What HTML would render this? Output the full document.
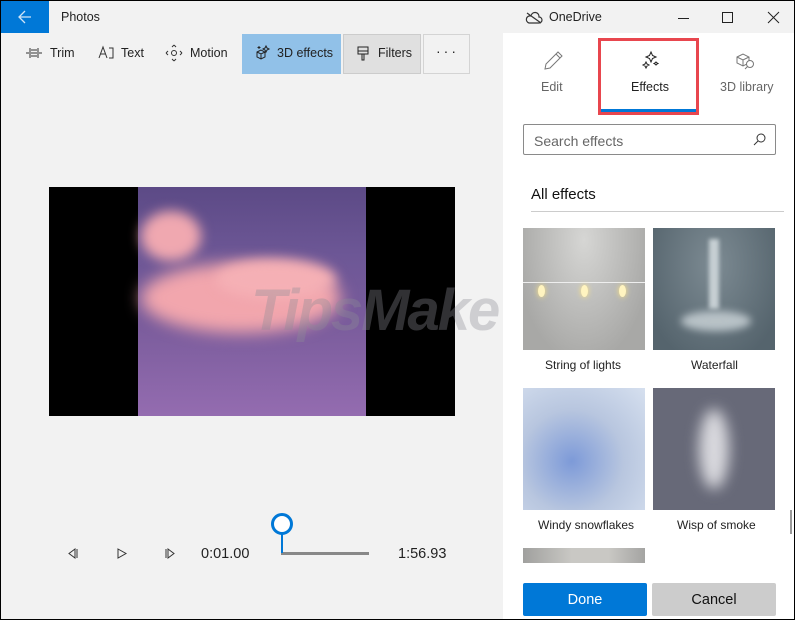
<!DOCTYPE html>
<html><head><meta charset="utf-8"><style>
*{margin:0;padding:0;box-sizing:border-box}
body{width:795px;height:620px;overflow:hidden;background:#000;font-family:"Liberation Sans",sans-serif;font-size:12.5px;color:#222;position:relative}
.a{position:absolute}
#win{left:1px;top:1px;width:793px;height:618px;background:#f2f2f2;overflow:hidden}
.t{position:absolute;white-space:nowrap}
svg{position:absolute;overflow:visible}
</style></head><body>
<div id="win" class="a">
 <div class="a" style="left:0;top:0;width:48px;height:32px;background:#0078d7"></div>
 <svg style="left:17px;top:9px" width="14" height="14"><path d="M1 7H13M7 1L1 7L7 13" stroke="#cfe4f7" stroke-width="1.3" fill="none"/></svg>
 <div class="t" style="left:60px;top:9px;font-size:12.5px">Photos</div>
 <svg style="left:25px;top:46px" width="16" height="12"><path d="M0 6H3M5 6H11M13 6H16M4 1V11M12 1V11M5 3H11M5 9H11" stroke="#333" stroke-width="1" fill="none"/></svg>
 <div class="t" style="left:49px;top:45px">Trim</div>
 <svg style="left:97px;top:45px" width="16" height="14"><path d="M1 12L5 1L9 12M2.5 8H7.5M11 2H15V12H11" stroke="#333" stroke-width="1" fill="none"/></svg>
 <div class="t" style="left:120px;top:45px">Text</div>
 <svg style="left:165px;top:44px" width="16" height="16"><circle cx="8" cy="8" r="2.5" stroke="#333" fill="none"/><path d="M8 0L6 2M8 0L10 2M8 16L6 14M8 16L10 14M0 8L2 6M0 8L2 10M16 8L14 6M16 8L14 10" stroke="#333" fill="none"/></svg>
 <div class="t" style="left:189px;top:45px">Motion</div>
 <div class="a" style="left:241px;top:33px;width:99px;height:40px;background:#91c1e8"></div>
 <svg style="left:254px;top:44px" width="16" height="16"><path d="M2 7L6 5L10 7V12L6 14L2 12ZM2 7L6 9L10 7M6 9V14M11 1L12 3L14 4L12 5L11 7L10 5L8 4L10 3ZM4 1V4M2.5 2.5H5.5" stroke="#222" fill="none"/></svg>
 <div class="t" style="left:276px;top:45px">3D effects</div>
 <div class="a" style="left:342px;top:33px;width:78px;height:40px;background:#e0e0e0;border:1px solid #ccc"></div>
 <svg style="left:356px;top:45px" width="12" height="16"><path d="M1 1H11V8H1ZM1 5H11M5 8V14H7V8" stroke="#222" fill="none"/></svg>
 <div class="t" style="left:377px;top:45px">Filters</div>
 <div class="a" style="left:422px;top:33px;width:47px;height:40px;border:1px solid #d4d4d4;background:#f2f2f2"></div>
 <div class="t" style="left:435px;top:42px;font-size:14px;letter-spacing:3px">···</div>
 <div class="a" style="left:48px;top:186px;width:406px;height:229px;background:#000"></div>
 <div class="a" style="left:137px;top:186px;width:228px;height:229px;background:linear-gradient(180deg,#5c4a86 0%,#6d5796 30%,#7a5c9c 60%,#946cb0 100%)"></div>
 <div class="a" style="left:140px;top:210px;width:60px;height:50px;border-radius:50%;background:#f0a8b0;filter:blur(6px)"></div>
 <div class="a" style="left:140px;top:262px;width:200px;height:70px;border-radius:50%;background:#f2a6ad;filter:blur(8px)"></div>
 <div class="a" style="left:215px;top:258px;width:120px;height:40px;border-radius:50%;background:#f5b0b5;filter:blur(6px)"></div>
 <div class="t" style="left:250px;top:276px;font-size:58px;font-weight:bold;font-style:italic;color:rgba(140,140,150,0.35);letter-spacing:-2px">TipsMake</div>
 <div class="t" style="left:502px;top:316px;font-size:17px;font-weight:bold;color:rgba(170,170,170,0.5)">.com</div>
 <svg style="left:67px;top:547px" width="10" height="11"><path d="M7 1L1 5.5L7 10ZM9 1V10" stroke="#333" fill="none"/></svg>
 <svg style="left:116px;top:547px" width="10" height="11"><path d="M1 1L9 5.5L1 10Z" stroke="#333" fill="none"/></svg>
 <svg style="left:164px;top:547px" width="10" height="11"><path d="M1 1V10M3 1L9 5.5L3 10Z" stroke="#333" fill="none"/></svg>
 <div class="t" style="left:200px;top:545px;font-size:14.5px">0:01.00</div>
 <div class="a" style="left:280px;top:551px;width:88px;height:3px;background:#888"></div>
 <div class="a" style="left:280px;top:530px;width:2px;height:22px;background:#0078d7"></div>
 <div class="a" style="left:270px;top:512px;width:22px;height:22px;border-radius:50%;border:3px solid #0078d7;background:#fff"></div>
 <div class="t" style="left:397px;top:545px;font-size:14.5px">1:56.93</div>
 <svg style="left:525px;top:11px" width="16" height="12"><path d="M3 11H13A3 3 0 0 0 13 5A4 4 0 0 0 5 4A3.5 3.5 0 0 0 3 11ZM1 1L15 11" stroke="#333" stroke-width="1.2" fill="none"/></svg>
 <div class="t" style="left:548px;top:9px;font-size:12.5px">OneDrive</div>
 <div class="a" style="left:677px;top:17px;width:11px;height:1px;background:#222"></div>
 <div class="a" style="left:721px;top:11px;width:11px;height:11px;border:1px solid #222"></div>
 <svg style="left:767px;top:11px" width="11" height="11"><path d="M0 0L11 11M11 0L0 11" stroke="#222" fill="none"/></svg>
 <div class="a" style="left:502px;top:32px;width:291px;height:586px;background:#fff"></div>
 <svg style="left:542px;top:50px" width="20" height="20"><path d="M2 18L3 13L15 1L19 5L7 17ZM13 3L17 7" stroke="#777" fill="none"/></svg>
 <div class="t" style="left:540px;top:79px;color:#666;font-size:12.5px">Edit</div>
 <div class="a" style="left:597px;top:37px;width:101px;height:77px;border:3px solid #e8464e"></div>
 <div class="a" style="left:600px;top:108px;width:95px;height:3px;background:#0078d7"></div>
 <svg style="left:640px;top:50px" width="18" height="20"><path d="M10 1L11.5 4.5L15 6L11.5 7.5L10 11L8.5 7.5L5 6L8.5 4.5ZM5 11L6 13L8 14L6 15L5 17L4 15L2 14L4 13ZM15 11L16 12L17 12.5L16 13L15 14L14 13L13 12.5L14 12Z" stroke="#222" fill="none"/></svg>
 <div class="t" style="left:630px;top:79px;font-size:12.5px">Effects</div>
 <svg style="left:734px;top:50px" width="22" height="22"><path d="M2 6L8 3L14 6V12L8 15L2 12ZM2 6L8 9L14 6M8 9V15" stroke="#777" fill="none"/><circle cx="15" cy="13" r="3.5" stroke="#777" fill="#fff"/><path d="M12.5 15.5L10 18" stroke="#777"/></svg>
 <div class="t" style="left:719px;top:79px;color:#666;font-size:12.5px">3D library</div>
 <div class="a" style="left:522px;top:123px;width:253px;height:31px;border:1px solid #8a8a8a;border-radius:2px"></div>
 <div class="t" style="left:533px;top:132px;color:#666;font-size:14px">Search effects</div>
 <svg style="left:752px;top:132px" width="13" height="13"><circle cx="8" cy="5" r="4" stroke="#333" fill="none"/><path d="M5 8L1 12" stroke="#333"/></svg>
 <div class="t" style="left:530px;top:185px;font-size:15px;color:#111">All effects</div>
 <div class="a" style="left:530px;top:210px;width:253px;height:1px;background:#ccc"></div>
 <div class="a" style="left:522px;top:227px;width:122px;height:122px;background:radial-gradient(ellipse at 50% 10%,#d6d6d4,#a8a8a6 80%)"></div>
 <div class="a" style="left:522px;top:281px;width:122px;height:1px;background:#eee"></div>
 <div class="a" style="left:537px;top:284px;width:7px;height:12px;border-radius:50%;background:#fff4c0;box-shadow:0 0 6px #ffe680"></div>
 <div class="a" style="left:580px;top:284px;width:7px;height:12px;border-radius:50%;background:#fff4c0;box-shadow:0 0 6px #ffe680"></div>
 <div class="a" style="left:618px;top:284px;width:7px;height:12px;border-radius:50%;background:#fff4c0;box-shadow:0 0 6px #ffe680"></div>
 <div class="a" style="left:652px;top:227px;width:122px;height:122px;background:radial-gradient(ellipse at 50% 30%,#7d8b93,#55646d 85%)"></div>
 <div class="a" style="left:708px;top:238px;width:10px;height:70px;background:#c7d0d4;filter:blur(2px)"></div>
 <div class="a" style="left:680px;top:310px;width:70px;height:20px;border-radius:50%;background:#b8c2c7;filter:blur(4px)"></div>
 <div class="t" style="left:544px;top:357px;font-size:12px">String of lights</div>
 <div class="t" style="left:690px;top:357px;font-size:12px">Waterfall</div>
 <div class="a" style="left:522px;top:387px;width:122px;height:122px;background:radial-gradient(ellipse at 40% 60%,#7d9ad8,#b8c6df 50%,#d6e0ef 100%)"></div>
 <div class="a" style="left:652px;top:387px;width:122px;height:122px;background:#676978"></div>
 <div class="a" style="left:698px;top:408px;width:30px;height:80px;border-radius:50%;background:#d8d8dd;filter:blur(7px)"></div>
 <div class="t" style="left:537px;top:517px;font-size:12px">Windy snowflakes</div>
 <div class="t" style="left:676px;top:517px;font-size:12px">Wisp of smoke</div>
 <div class="a" style="left:522px;top:547px;width:122px;height:15px;background:linear-gradient(90deg,#a0a09e,#c9c8c4 40%,#c9c8c4 70%,#a4a4a2)"></div>
 <div class="a" style="left:789px;top:509px;width:2px;height:24px;background:#999"></div>
 <div class="a" style="left:522px;top:582px;width:124px;height:33px;background:#0078d7;border-radius:2px"></div>
 <div class="t" style="left:522px;top:591px;width:124px;text-align:center;color:#fff;font-size:14.5px">Done</div>
 <div class="a" style="left:651px;top:582px;width:124px;height:33px;background:#ccc;border-radius:2px"></div>
 <div class="t" style="left:651px;top:591px;width:124px;text-align:center;color:#111;font-size:14.5px">Cancel</div>
</div>
</body></html>
